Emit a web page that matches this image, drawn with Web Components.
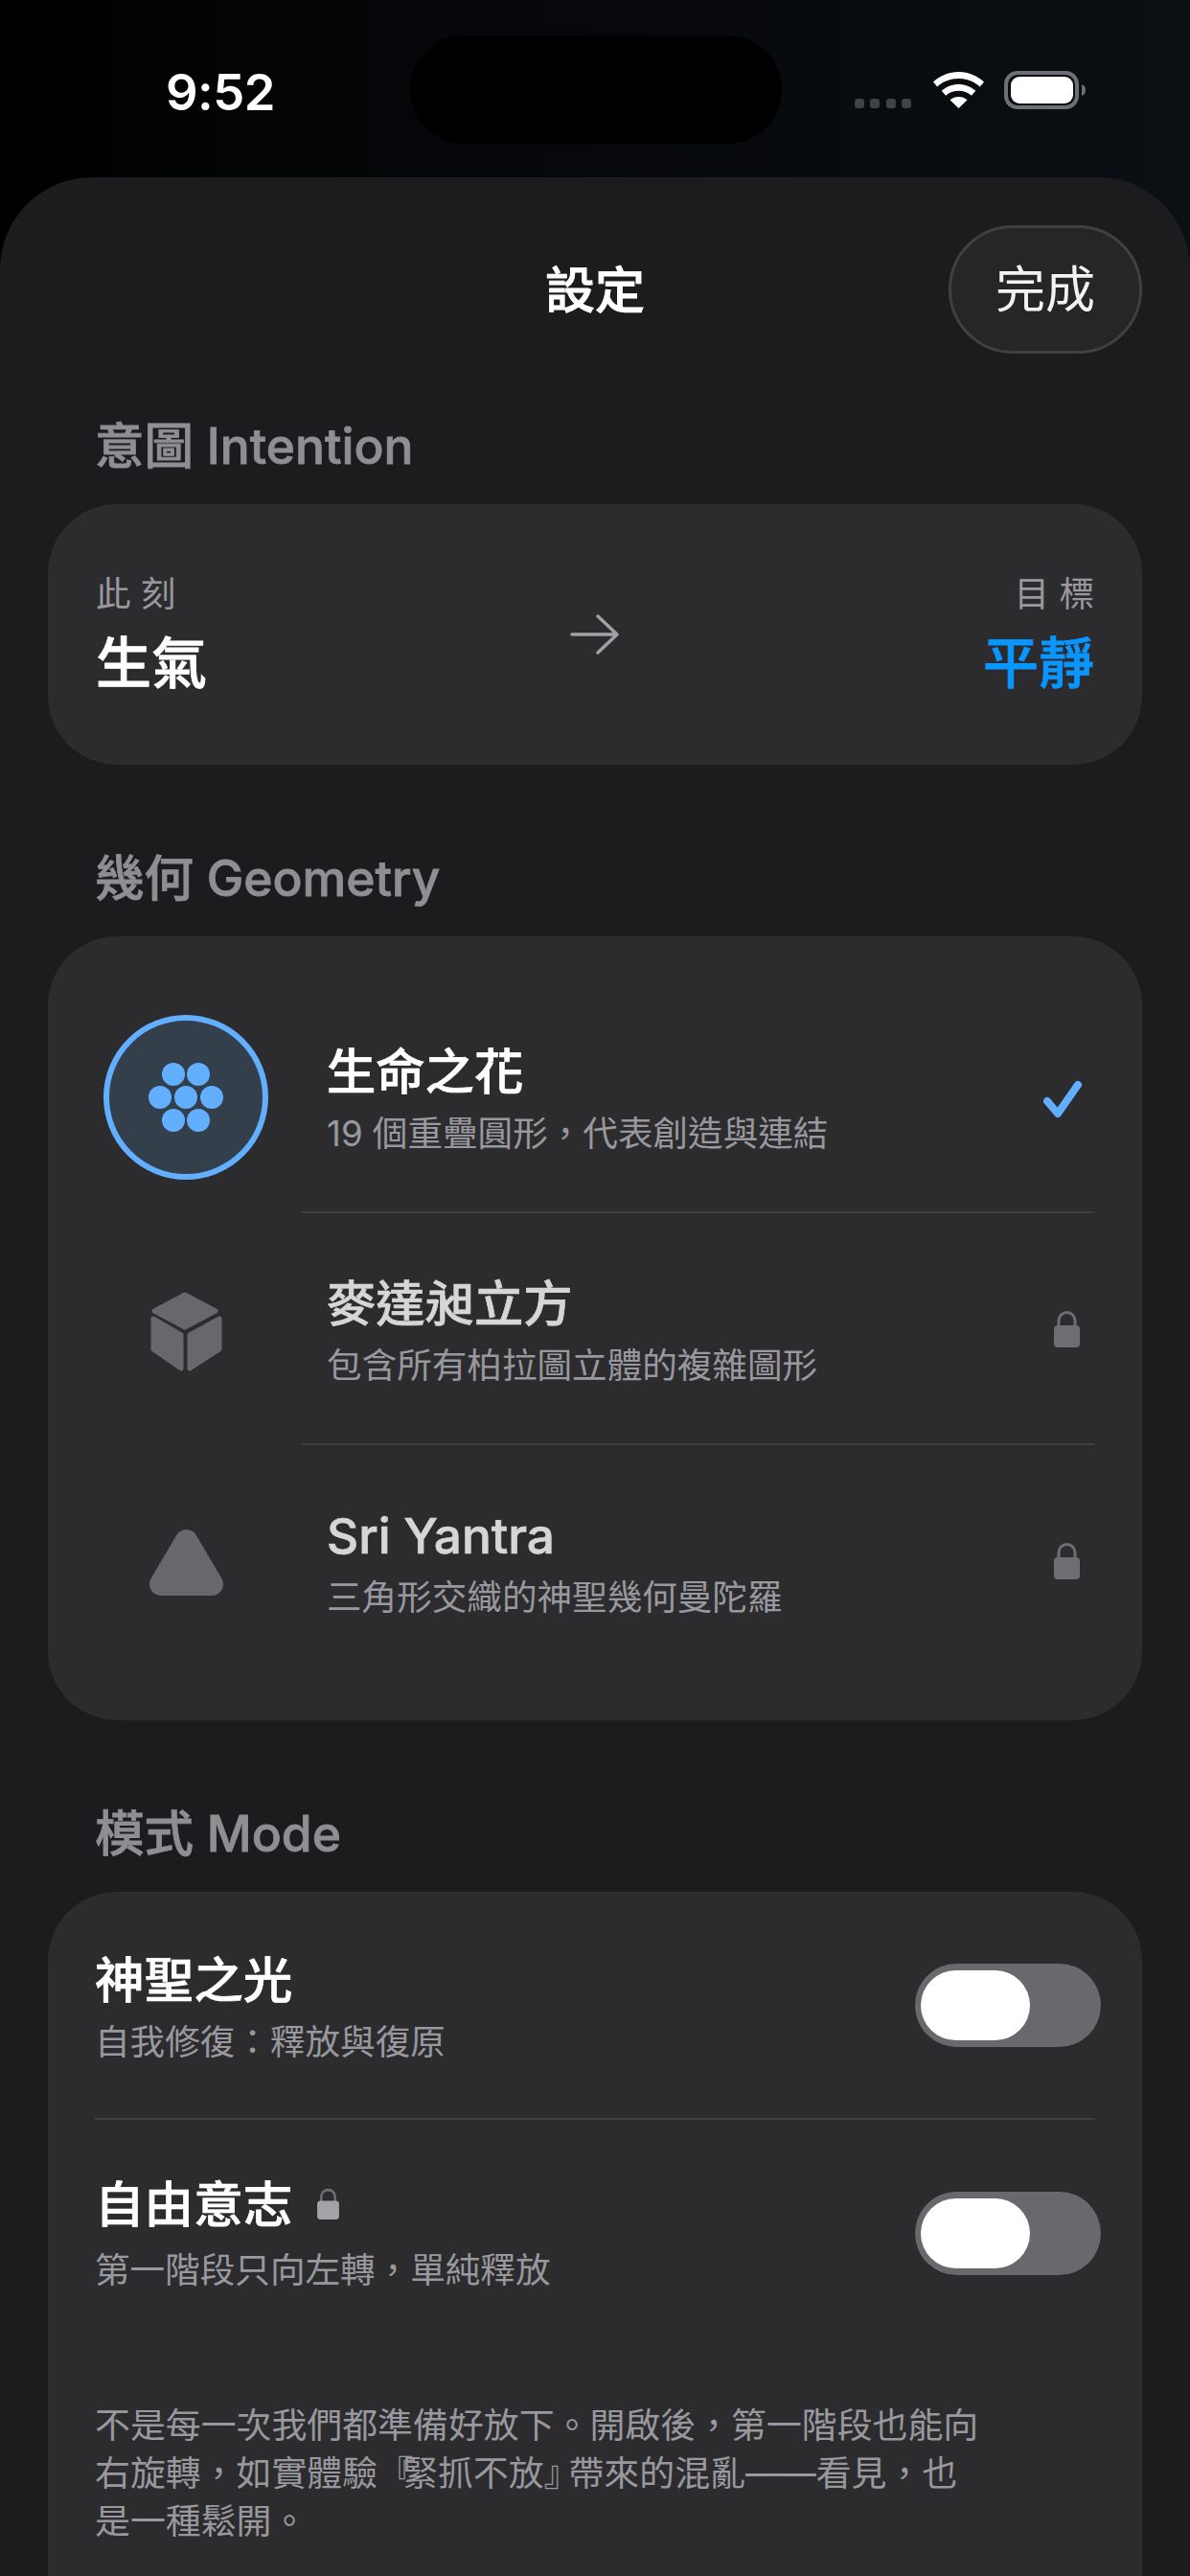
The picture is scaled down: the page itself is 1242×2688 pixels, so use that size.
<!DOCTYPE html>
<html lang="zh-Hant">
<head>
<meta charset="utf-8">
<title>設定</title>
<style>
  html, body { margin: 0; padding: 0; background: #000; }
  body {
    font-family: Inter, "Noto Sans CJK TC", sans-serif;
    color: #fff;
  }
  .tight { letter-spacing: -11px; }
</style>
</head>
<body>
<settings-screen>
  <status-bar slot="status" time="9:52"></status-bar>
  <settings-sheet heading="設定" action="完成">
    <section-group label="意圖 Intention">
      <intent-card>
        <span slot="from-label">此 刻</span>
        <span slot="from">生氣</span>
        <span slot="to-label">目 標</span>
        <span slot="to">平靜</span>
      </intent-card>
    </section-group>
    <section-group label="幾何 Geometry">
      <settings-card pad="47px 0 45px">
        <geometry-row selected>
          <flower-icon slot="icon"></flower-icon>
          <span slot="title">生命之花</span>
          <span slot="sub">19 個重疊圓形，代表創造與連結</span>
          <check-icon slot="end"></check-icon>
        </geometry-row>
        <geometry-row locked>
          <cube-icon slot="icon"></cube-icon>
          <span slot="title">麥達昶立方</span>
          <span slot="sub">包含所有柏拉圖立體的複雜圖形</span>
          <lock-icon slot="end"></lock-icon>
        </geometry-row>
        <geometry-row locked last>
          <triangle-icon slot="icon"></triangle-icon>
          <span slot="title">Sri Yantra</span>
          <span slot="sub">三角形交織的神聖幾何曼陀羅</span>
          <lock-icon slot="end"></lock-icon>
        </geometry-row>
      </settings-card>
    </section-group>
    <section-group label="模式 Mode">
      <settings-card pad="0 0 200px">
        <mode-row>
          <span slot="title">神聖之光</span>
          <span slot="sub">自我修復：釋放與復原</span>
        </mode-row>
        <mode-row divided>
          <span slot="title">自由意志</span>
          <lock-icon slot="badge" tone="light"></lock-icon>
          <span slot="sub">第一階段只向左轉，單純釋放</span>
          <mode-note slot="note">不是每一次我們都準備好放下。開啟後，第一階段也能向<br>右旋轉，如實體驗<span class="tight">『</span>緊抓不放<span class="tight">』</span>帶來的混亂——看見，也<br>是一種鬆開。</mode-note>
        </mode-row>
      </settings-card>
    </section-group>
  </settings-sheet>
</settings-screen>

<script>
  // small helper so each class only has to hand over its markup
  function defineEl(name, html) {
    class El extends HTMLElement {
      constructor() {
        super();
        this.shadow = this.attachShadow({ mode: "open" });
        this.shadow.innerHTML = html;
      }
    }
    customElements.define(name, El);
    return El;
  }

  defineEl("settings-screen", `<style>
    :host {
      display: flex; flex-direction: column;
      width: 1242px; height: 2688px; overflow: hidden;
      background: linear-gradient(90deg, #000 0%, #05070a 40%, #0c0f13 100%);
    }
  </style><slot name="status"></slot><slot></slot>`);

  class StatusBar extends HTMLElement {
    constructor() {
      super();
      this.shadow = this.attachShadow({ mode: "open" });
    }
    connectedCallback() {
      this.shadow.innerHTML = `<style>
        :host { display: block; height: 185px; flex: none; box-sizing: border-box; padding-top: 37px; }
        .bar { display: grid; grid-template-columns: 428px 388px 1fr; height: 113px; }
        .time { font: 600 52.5px/1 Inter, sans-serif; color: #fff; padding: 33px 0 0 173px; letter-spacing: -.5px; }
        .island { background: #000; border-radius: 56px; }
        .icons { display: flex; align-items: flex-start; padding: 37px 0 0 76px; }
        .dots { display: flex; gap: 6.3px; margin-top: 29px; }
        .dots i { width: 10px; height: 10px; border-radius: 3px; background: #3f4246; }
        .wifi { margin-left: 23px; margin-top: 1px; }
        .batt { margin-left: 21px; }
      </style>
      <div class="bar">
        <div class="time">${this.getAttribute("time")}</div>
        <div class="island"></div>
        <div class="icons">
          <div class="dots"><i></i><i></i><i></i><i></i></div>
          <svg class="wifi" width="53" height="38" viewBox="0 0 53 38">
            <path fill="#fff" d="M26.5 0C16.5 0 7.5 3.8 0 10.5l4.2 5C10.2 9.9 18 7 26.5 7s16.3 2.9 22.3 8.5l4.2-5C45.5 3.8 36.5 0 26.5 0z"/>
            <path fill="#fff" d="M26.5 13c-6.8 0-13 2.5-17.7 6.8l4.3 5c3.6-3.2 8.3-5 13.4-5s9.8 1.8 13.4 5l4.3-5C39.5 15.5 33.3 13 26.5 13z"/>
            <path fill="#fff" d="M26.5 26c-3.4 0-6.5 1.2-9 3.3L26.5 38l9-8.7c-2.5-2.1-5.6-3.3-9-3.3z"/>
          </svg>
          <svg class="batt" width="86" height="40" viewBox="0 0 86 40">
            <rect x="2" y="2" width="74" height="36" rx="12" fill="none" stroke="#6d6f72" stroke-width="4"/>
            <rect x="7" y="6" width="65" height="28" rx="9" fill="#fff"/>
            <path d="M81 14c3 1 4 3 4 6s-1 5-4 6z" fill="#6d6f72"/>
          </svg>
        </div>
      </div>`;
    }
  }
  customElements.define("status-bar", StatusBar);

  class SettingsSheet extends HTMLElement {
    constructor() {
      super();
      this.shadow = this.attachShadow({ mode: "open" });
    }
    connectedCallback() {
      this.shadow.innerHTML = `<style>
        :host {
          display: block; flex: 1; min-height: 0; overflow: hidden;
          box-sizing: border-box; padding: 50px 50px 0;
          background: #1c1c1e; border-radius: 96px 96px 0 0;
        }
        header { display: grid; grid-template-columns: 202px 1fr 202px; align-items: center; height: 134px; margin-bottom: 66px; }
        h1 { grid-column: 2; margin: 0; padding-top: 3px; text-align: center; font: 500 52px/60px Inter, "Noto Sans CJK TC", sans-serif; -webkit-text-stroke: .8px #fff; color: #fff; }
        .done {
          box-sizing: border-box; height: 134px; padding-top: 2px; display: flex; align-items: center; justify-content: center;
          border: 3px solid #404043; border-radius: 67px; background: #262628;
          font: 400 52px/60px Inter, "Noto Sans CJK TC", sans-serif; color: #f2f2f2;
        }
      </style>
      <header><h1>${this.getAttribute("heading")}</h1><div class="done">${this.getAttribute("action")}</div></header>
      <slot></slot>`;
    }
  }
  customElements.define("settings-sheet", SettingsSheet);

  class SectionGroup extends HTMLElement {
    constructor() {
      super();
      this.shadow = this.attachShadow({ mode: "open" });
    }
    connectedCallback() {
      this.shadow.innerHTML = `<style>
        :host { display: block; margin-bottom: 88px; }
        h2 { margin: 0 0 31px 49px; font: 500 51.5px/60px Inter, "Noto Sans CJK TC", sans-serif; -webkit-text-stroke: .8px #8e8e93; color: #8e8e93; }
      </style><h2>${this.getAttribute("label")}</h2><slot></slot>`;
    }
  }
  customElements.define("section-group", SectionGroup);

  defineEl("intent-card", `<style>
    :host {
      display: flex; justify-content: space-between; align-items: center;
      box-sizing: border-box; height: 272px; padding: 0 50px;
      background: #2c2c2e; border-radius: 72px;
      font-family: Inter, "Noto Sans CJK TC", sans-serif;
    }
    .side { display: flex; flex-direction: column; gap: 16px; }
    .side.right { text-align: right; }
    .small { font-size: 36.6px; line-height: 44px; color: #98989e; }
    .big { font-size: 58px; line-height: 68px; font-weight: 500; -webkit-text-stroke: .8px currentColor; color: #fff; }
    .right .big { color: #0a96ff; }
    svg { display: block; }
  </style>
  <div class="side">
    <div class="small"><slot name="from-label"></slot></div>
    <div class="big"><slot name="from"></slot></div>
  </div>
  <svg width="52" height="42" viewBox="0 0 52 42" fill="none" stroke="#a0a0a5" stroke-width="3.5" stroke-linecap="round" stroke-linejoin="round">
    <path d="M2 21H49M29 2l20 19-20 19"/>
  </svg>
  <div class="side right">
    <div class="small"><slot name="to-label"></slot></div>
    <div class="big"><slot name="to"></slot></div>
  </div>`);

  class SettingsCard extends HTMLElement {
    constructor() {
      super();
      this.shadow = this.attachShadow({ mode: "open" });
      this.shadow.innerHTML = `<style>
        :host { display: block; background: #2c2c2e; border-radius: 72px; overflow: hidden; }
        .inner { display: flow-root; }
      </style><div class="inner"><slot></slot></div>`;
    }
    connectedCallback() {
      this.shadow.querySelector(".inner").style.padding = this.getAttribute("pad") || "0";
    }
  }
  customElements.define("settings-card", SettingsCard);

  defineEl("geometry-row", `<style>
    :host {
      display: grid; grid-template-columns: 172px 1fr; column-gap: 34px;
      padding-left: 58px; padding-right: 49px;
      font-family: Inter, "Noto Sans CJK TC", sans-serif;
    }
    .icon { align-self: center; width: 172px; height: 172px; }
    .body {
      display: flex; align-items: center; justify-content: space-between;
      height: 240px; padding-left: 27px;
      border-bottom: 2px solid #3e3e41;
    }
    :host([last]) .body { border-bottom-color: transparent; }
    .text { padding-top: 5px; }
    .title { font-size: 51.3px; line-height: 62px; font-weight: 500; -webkit-text-stroke: .7px currentColor; color: #fff; }
    :host([locked]) .title { color: #d6d6d8; }
    .sub { font-size: 36.6px; line-height: 46px; color: #98989e; margin-top: 11px; }
  </style>
  <div class="icon"><slot name="icon"></slot></div>
  <div class="body">
    <div class="text">
      <div class="title"><slot name="title"></slot></div>
      <div class="sub"><slot name="sub"></slot></div>
    </div>
    <slot name="end"></slot>
  </div>`);

  defineEl("flower-icon", `<style>:host { display: block; } svg { display: block; }</style>
    <svg width="172" height="172" viewBox="0 0 172 172">
      <circle cx="86" cy="86" r="83" fill="#343f4c" stroke="#62aeff" stroke-width="6"/>
      <g fill="#62aeff">
        <circle cx="86" cy="86" r="12"/><circle cx="59" cy="86" r="12"/><circle cx="113" cy="86" r="12"/>
        <circle cx="73" cy="62" r="12"/><circle cx="99" cy="62" r="12"/>
        <circle cx="73" cy="110" r="12"/><circle cx="99" cy="110" r="12"/>
      </g>
    </svg>`);

  defineEl("cube-icon", `<style>:host { display: block; } svg { display: block; }</style>
    <svg width="172" height="172" viewBox="0 0 172 172">
      <g fill="#68686c" stroke="#68686c" stroke-width="5" stroke-linejoin="round">
        <path d="M85 50L117 67 85 84 53 67Z"/>
        <path d="M52 75L81 92V127L52 107Z"/>
        <path d="M90 92L121 75V107L90 127Z"/>
      </g>
    </svg>`);

  defineEl("triangle-icon", `<style>:host { display: block; } svg { display: block; }</style>
    <svg width="172" height="172" viewBox="0 0 172 172">
      <path d="M86.5 65L60 110H113Z" fill="#68686c" stroke="#68686c" stroke-width="24" stroke-linejoin="round"/>
    </svg>`);

  defineEl("check-icon", `<style>:host { display: block; margin: 10px 9px 0 0; } svg { display: block; }</style>
    <svg width="46" height="44" viewBox="0 0 46 44" fill="none" stroke="#62aeff" stroke-width="8" stroke-linecap="round" stroke-linejoin="round">
      <path d="M5 22L16 35 37 5"/>
    </svg>`);

  class LockIcon extends HTMLElement {
    constructor() {
      super();
      this.shadow = this.attachShadow({ mode: "open" });
    }
    connectedCallback() {
      const light = this.getAttribute("tone") === "light";
      const body = light ? "#a3a3a8" : "#6e6e73";
      const w = light ? 23 : 27;
      const h = light ? 33 : 39;
      this.shadow.innerHTML = `<style>
        :host { display: block; margin-right: ${light ? 0 : 16}px; }
        svg { display: block; }
      </style>
      <svg width="${w}" height="${h}" viewBox="0 0 27 39">
        <path d="M5 18V11a8.5 8.5 0 0 1 17 0v7" fill="none" stroke="#6e6e73" stroke-width="3"/>
        <rect x="0" y="16" width="27" height="23" rx="4" fill="${body}"/>
      </svg>`;
    }
  }
  customElements.define("lock-icon", LockIcon);

  defineEl("toggle-switch", `<style>
    :host {
      display: flex; align-items: center; flex: none;
      box-sizing: border-box; width: 194px; height: 87px; padding-left: 6px;
      background: #68686d; border-radius: 44px;
    }
    i { width: 114px; height: 73px; border-radius: 37px; background: #fff; }
  </style><i></i>`);

  class ModeRow extends HTMLElement {
    constructor() {
      super();
      this.shadow = this.attachShadow({ mode: "open" });
      this.shadow.innerHTML = `<style>
        :host { display: block; margin: 0 49px; font-family: Inter, "Noto Sans CJK TC", sans-serif; }
        :host([divided]) { border-top: 2px solid #3e3e41; }
        .main { display: flex; align-items: center; justify-content: space-between; height: 236px; margin-right: -6px; }
        .text { padding-top: 4px; }
        .title { display: flex; align-items: center; gap: 26px; font-size: 51.6px; line-height: 62px; font-weight: 500; -webkit-text-stroke: .7px currentColor; color: #fff; }
        :host([divided]) .title { margin-top: -4px; }
        .sub { font-size: 36.6px; line-height: 46px; color: #98989e; margin-top: 11px; }
        :host([divided]) .sub { margin-top: 15px; }
      </style>
      <div class="main">
        <div class="text">
          <div class="title"><span><slot name="title"></slot></span><slot name="badge"></slot></div>
          <div class="sub"><slot name="sub"></slot></div>
        </div>
        <toggle-switch></toggle-switch>
      </div>
      <slot name="note"></slot>`;
    }
  }
  customElements.define("mode-row", ModeRow);

  defineEl("mode-note", `<style>
    :host { display: block; padding: 58px 0 0 0; font: 400 36.9px/50px Inter, "Noto Sans CJK TC", sans-serif; color: #98989e; }
  </style><slot></slot>`);
</script>
</body>
</html>
